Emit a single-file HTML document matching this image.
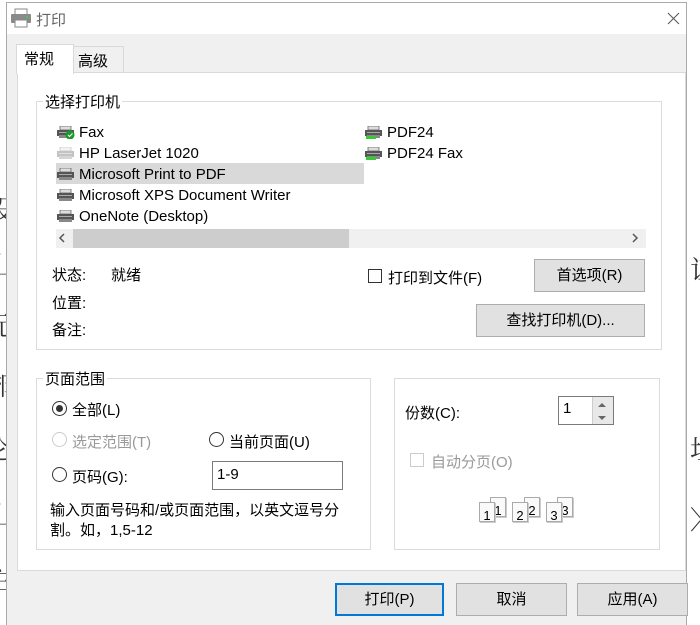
<!DOCTYPE html>
<html><head><meta charset="utf-8"><style>
*{margin:0;padding:0;box-sizing:border-box}
body{width:700px;height:625px;background:#fff;position:relative;overflow:hidden;font-family:"Liberation Sans","Noto Sans CJK SC",sans-serif;font-size:15px;color:#000}
.a{position:absolute;white-space:nowrap}
.bg{position:absolute;font-family:"Noto Serif CJK SC",serif;font-size:26px;color:#333}
.win{position:absolute;left:6px;top:2px;width:681px;height:623px;background:#f0f0f0;border:1px solid #aaa;border-bottom:none}
.btn{position:absolute;background:#e1e1e1;border:1px solid #adadad;text-align:center;font-size:15px}
.grp{position:absolute;border:1px solid #dcdcdc}
.gl{position:absolute;top:-11px;left:6px;background:#fff;padding:0 2px;font-size:15px}
.rad{position:absolute;width:15px;height:15px;border:1px solid #333;border-radius:50%;background:#fff}
.chk{position:absolute;width:14px;height:14px;border:1px solid #333;background:#fff}
.pr{position:absolute;width:18px;height:13px}
.pg{position:absolute;width:16px;height:20px;background:#fafafa;border:1px solid #aaa;font-size:13px;text-align:center;line-height:26px;box-shadow:1px 1px 0 #ccc}
</style></head><body>
<div class="bg" style="left:-12px;top:190px">设</div>
<div class="bg" style="left:-14px;top:246px">山</div>
<div class="bg" style="left:-14px;top:306px">元</div>
<div class="bg" style="left:-14px;top:366px">郊</div>
<div class="bg" style="left:-14px;top:430px">仑</div>
<div class="bg" style="left:-14px;top:496px">山</div>
<div class="bg" style="left:-14px;top:560px">主</div>
<div class="bg" style="left:690px;top:250px">讧</div>
<div class="bg" style="left:690px;top:430px">垃</div>
<div class="bg" style="left:690px;top:500px">〉</div>
<div class="win"></div>
<div class="a" style="left:7px;top:3px;width:679px;height:31px;background:#fff"></div>
<svg class="a" style="left:10px;top:8px" width="22" height="20" viewBox="0 0 22 20"><rect x="5" y="1" width="12" height="6" fill="#fff" stroke="#888"/><rect x="1" y="6" width="20" height="9" rx="1" fill="#8a8a8a"/><rect x="5" y="12" width="12" height="7" fill="#fff" stroke="#888"/><rect x="16" y="8" width="2" height="2" fill="#4c4"/></svg>
<div class="a" style="left:36px;top:9px;font-size:15px;color:#666">打印</div>
<svg class="a" style="left:667px;top:12px" width="13" height="13"><path d="M1 1L12 12M12 1L1 12" stroke="#555" stroke-width="1"/></svg>
<div class="a" style="left:73px;top:46px;width:51px;height:27px;border:1px solid #d9d9d9;background:#f0f0f0"></div>
<div class="a" style="left:78px;top:50px;font-size:15px">高级</div>
<div class="a" style="left:17px;top:72px;width:669px;height:499px;background:#fff;border:1px solid #d9d9d9"></div>
<div class="a" style="left:16px;top:44px;width:58px;height:30px;background:#fff;border:1px solid #d9d9d9;border-bottom:none"></div>
<div class="a" style="left:24px;top:48px;font-size:15px">常规</div>
<div class="grp" style="left:36px;top:101px;width:626px;height:249px"><div class="gl">选择打印机</div></div>
<div class="a" style="left:56px;top:163px;width:308px;height:21px;background:#d9d9d9"></div>
<svg width="0" height="0" style="position:absolute"><defs><g id="p"><rect x="3" y="0" width="11" height="4" fill="#ddd" stroke="#666" stroke-width=".8"/><rect x="0" y="4" width="17" height="6" fill="#555"/><rect x="2" y="6" width="13" height="1" fill="#aaa"/><rect x="2" y="9" width="13" height="3" fill="#888"/></g></defs></svg>
<svg class="pr" style="left:57px;top:126px"><use href="#p"/><circle cx="13" cy="9" r="4.5" fill="#1a9a2a"/><path d="M11 9l1.5 1.5 3-3" stroke="#fff" fill="none"/></svg>
<svg class="pr" style="left:57px;top:147px;opacity:.35"><use href="#p"/></svg>
<svg class="pr" style="left:57px;top:168px"><use href="#p"/></svg>
<svg class="pr" style="left:57px;top:189px"><use href="#p"/></svg>
<svg class="pr" style="left:57px;top:210px"><use href="#p"/></svg>
<svg class="pr" style="left:365px;top:126px"><use href="#p"/><rect x="1" y="10" width="10" height="3" fill="#3c3"/></svg>
<svg class="pr" style="left:365px;top:147px"><use href="#p"/><rect x="1" y="10" width="10" height="3" fill="#3c3"/></svg>
<div class="a" style="left:79px;top:124px;font-size:15px">Fax</div>
<div class="a" style="left:79px;top:145px;font-size:15px">HP LaserJet 1020</div>
<div class="a" style="left:79px;top:166px;font-size:15px">Microsoft Print to PDF</div>
<div class="a" style="left:79px;top:187px;font-size:15px">Microsoft XPS Document Writer</div>
<div class="a" style="left:79px;top:208px;font-size:15px">OneNote (Desktop)</div>
<div class="a" style="left:387px;top:124px;font-size:15px">PDF24</div>
<div class="a" style="left:387px;top:145px;font-size:15px">PDF24 Fax</div>
<div class="a" style="left:56px;top:229px;width:590px;height:19px;background:#f0f0f0"></div>
<div class="a" style="left:73px;top:229px;width:276px;height:19px;background:#cdcdcd"></div>
<svg class="a" style="left:58px;top:233px" width="10" height="10"><path d="M6 1L2 5l4 4" stroke="#555" stroke-width="1.5" fill="none"/></svg>
<svg class="a" style="left:630px;top:233px" width="10" height="10"><path d="M3 1l4 4-4 4" stroke="#555" stroke-width="1.5" fill="none"/></svg>
<div class="a" style="left:52px;top:264px">状态:</div>
<div class="a" style="left:111px;top:264px">就绪</div>
<div class="a" style="left:52px;top:292px">位置:</div>
<div class="a" style="left:52px;top:319px">备注:</div>
<div class="chk" style="left:368px;top:269px"></div>
<div class="a" style="left:388px;top:267px;font-size:15px">打印到文件(F)</div>
<div class="btn" style="left:534px;top:259px;width:111px;height:33px;line-height:31px">首选项(R)</div>
<div class="btn" style="left:476px;top:304px;width:169px;height:33px;line-height:31px">查找打印机(D)...</div>
<div class="grp" style="left:36px;top:378px;width:335px;height:172px"><div class="gl">页面范围</div></div>
<div class="rad" style="left:52px;top:401px"></div><div class="a" style="left:56px;top:405px;width:7px;height:7px;border-radius:50%;background:#333"></div>
<div class="a" style="left:72px;top:399px">全部(L)</div>
<div class="rad" style="left:52px;top:432px;border-color:#ccc"></div>
<div class="a" style="left:72px;top:431px;color:#999">选定范围(T)</div>
<div class="rad" style="left:209px;top:432px"></div>
<div class="a" style="left:229px;top:431px">当前页面(U)</div>
<div class="rad" style="left:52px;top:467px"></div>
<div class="a" style="left:72px;top:466px">页码(G):</div>
<div class="a" style="left:212px;top:461px;width:131px;height:29px;border:1px solid #7a7a7a;background:#fff;padding:4px 4px;font-size:15px">1-9</div>
<div class="a" style="left:50px;top:499px">输入页面号码和/或页面范围，以英文逗号分</div>
<div class="a" style="left:50px;top:519px">割。如，1,5-12</div>
<div class="grp" style="left:394px;top:378px;width:266px;height:172px"></div>
<div class="a" style="left:405px;top:402px">份数(C):</div>
<div class="a" style="left:558px;top:396px;width:56px;height:29px;border:1px solid #7a7a7a;background:#fff;padding:3px 4px;font-size:15px">1</div>
<div class="a" style="left:592px;top:397px;width:21px;height:27px;background:#e8e8e8;border-left:1px solid #ccc"></div>
<svg class="a" style="left:597px;top:402px" width="10" height="20"><path d="M1 5l4-4 4 4z M1 14l4 4 4-4z" fill="#666"/></svg>
<div class="chk" style="left:410px;top:453px;border-color:#ccc"></div>
<div class="a" style="left:431px;top:451px;color:#999">自动分页(O)</div>
<div class="pg" style="left:490px;top:497px">1</div><div class="pg" style="left:479px;top:502px">1</div>
<div class="pg" style="left:524px;top:497px">2</div><div class="pg" style="left:512px;top:502px">2</div>
<div class="pg" style="left:557px;top:497px">3</div><div class="pg" style="left:546px;top:502px">3</div>
<div class="btn" style="left:335px;top:583px;width:109px;height:33px;line-height:29px;border:2px solid #0078d7">打印(P)</div>
<div class="btn" style="left:456px;top:583px;width:111px;height:33px;line-height:31px">取消</div>
<div class="btn" style="left:577px;top:583px;width:111px;height:33px;line-height:31px">应用(A)</div>
</body></html>
